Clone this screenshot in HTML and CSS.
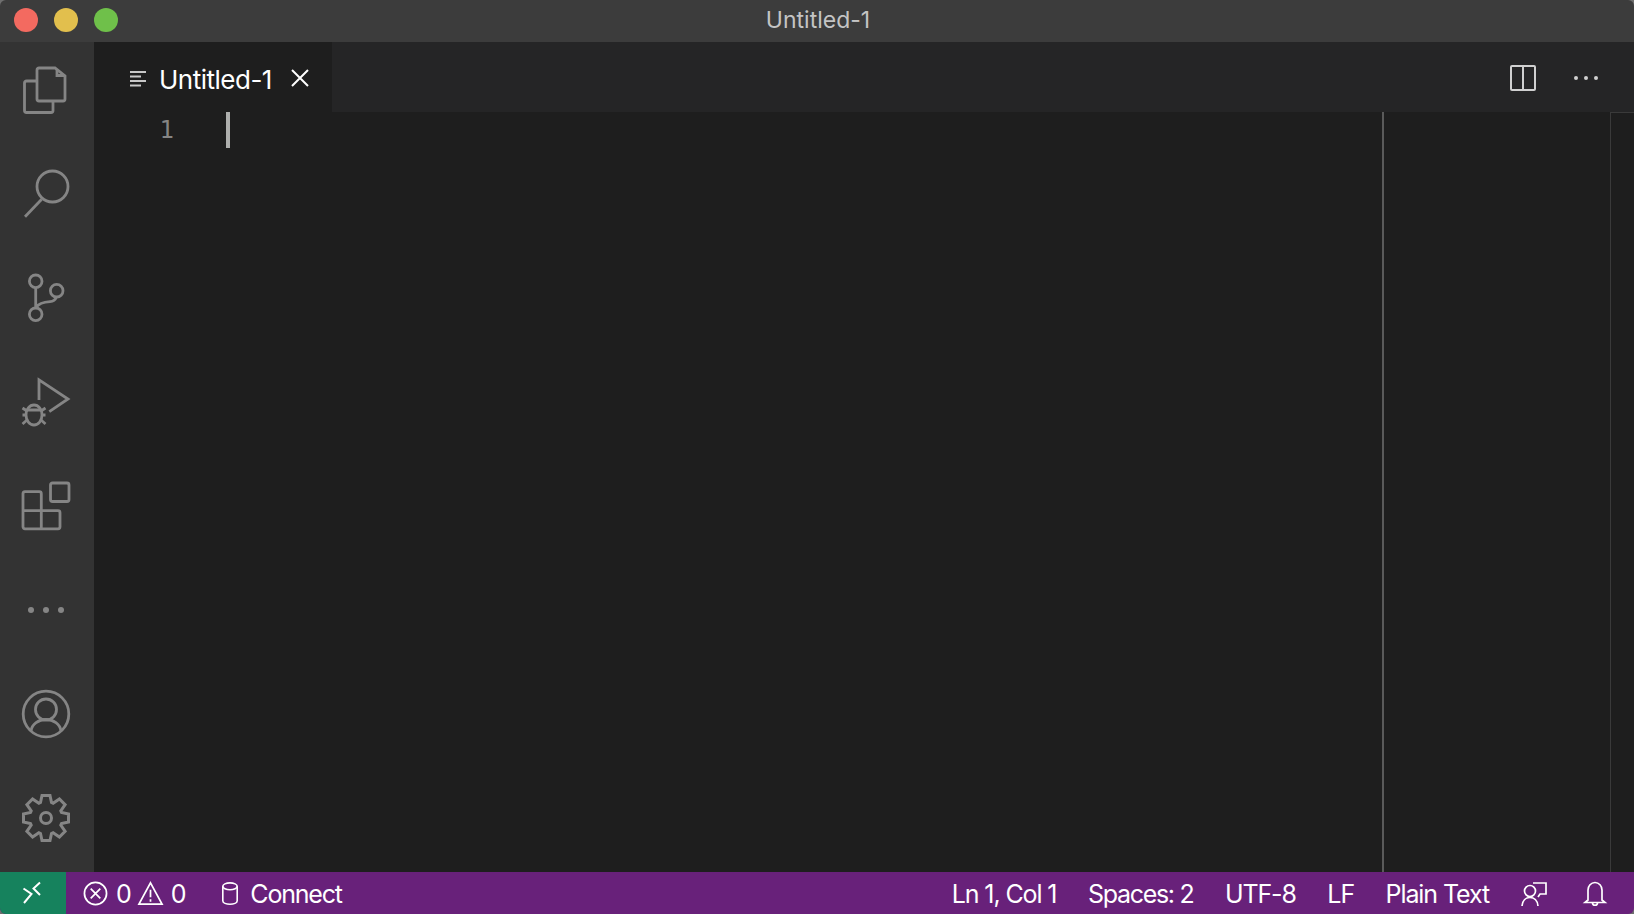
FILE: index.html
```html
<!DOCTYPE html>
<html lang="en">
<head>
<meta charset="utf-8">
<title>Untitled-1</title>
<link rel="stylesheet" href="styles.css">
</head>
<body>
<div class="window">
  <header class="titlebar">
    <div class="lights"><span class="light red"></span><span class="light yellow"></span><span class="light green"></span></div>
    <div class="title">Untitled-1</div>
  </header>
  <div class="main">
    <nav class="activity">
      <svg class="act" viewBox="0 0 48 48"><path d="M17 2H33L43 10V33A2 2 0 0 1 41 35H17A2 2 0 0 1 15 33V4A2 2 0 0 1 17 2Z"/><path d="M35 3V9.500H42.500"/><path d="M15 15H4.500A2 2 0 0 0 2.500 17V44.500A2 2 0 0 0 4.500 46.500H29A2 2 0 0 0 31 44.500V35"/></svg>
      <svg class="act" viewBox="0 0 48 48"><circle cx="30.500" cy="16.500" r="15.500"/><path d="M19.700 29.300L3 46.700"/></svg>
      <svg class="act" viewBox="0 0 48 48"><circle cx="13.700" cy="7.300" r="6.300"/><circle cx="34.700" cy="16.700" r="6.300"/><circle cx="13.700" cy="40.300" r="6.300"/><path d="M13.700 13.600V34"/><path d="M14 33.500C17 29 23 28 28 27.700C32 27.500 33.500 25.500 34.500 23"/></svg>
      <svg class="act" viewBox="0 0 48 48"><path d="M17 22V1.800L46 21L27.300 33.700"/><ellipse cx="12" cy="37" rx="8" ry="10"/><path d="M4.500 32H19.500M5 33L0.500 30M19 33L23.500 30M4 37H0.500M20 37H23.500M5 42L0.500 46M19 42L23.500 46"/></svg>
      <svg class="act" viewBox="0 0 48 48"><rect x="28.500" y="1" width="18.500" height="18.500" rx="2"/><path d="M1 11.500A2 2 0 0 1 3 9.700H17.300A2 2 0 0 1 19.300 11.700V28.700H36A2 2 0 0 1 38 30.700V44.800A2 2 0 0 1 36 46.800H3A2 2 0 0 1 1 44.800ZM1 28.700H19.300V46.800"/></svg>
      <svg class="act" viewBox="0 0 48 48"><g class="fill"><circle cx="9" cy="24" r="3"/><circle cx="24" cy="24" r="3"/><circle cx="39" cy="24" r="3"/></g></svg>
      <div class="act-spacer"></div>
      <svg class="act" viewBox="0 0 48 48"><circle cx="24" cy="24" r="22.800"/><circle cx="24" cy="19.500" r="10.500"/><path d="M9 41C10 34 16.500 29.500 24 29.500S38 34 39 41"/></svg>
      <svg class="act gear" viewBox="-24 -24 48 48"><path d="M-4-22.500L4-22.500L5.500-15.500L7.100-14.800L13.400-19.100L19.100-13.400L14.800-7.100L15.500-5.500L22.500-4L22.500 4L15.500 5.500L14.800 7.100L19.100 13.400L13.400 19.100L7.100 14.800L5.500 15.500L4 22.500L-4 22.500L-5.500 15.500L-7.100 14.800L-13.400 19.100L-19.100 13.400L-14.800 7.100L-15.500 5.500L-22.500 4L-22.500-4L-15.500-5.500L-14.800-7.100L-19.100-13.400L-13.400-19.100L-7.100-14.800L-5.500-15.500Z"/><circle cx="0" cy="0" r="5.500"/></svg>
    </nav>
    <section class="editor">
      <div class="tabbar">
        <div class="tab">
          <svg class="tab-icon" viewBox="0 0 18 17"><path d="M1 2H17M1 6.500H12M1 11H17M1 15.500H12"/></svg>
          <span class="tab-label">Untitled-1</span>
          <svg class="tab-close" viewBox="0 0 18 18"><path d="M1 1L17 17M17 1L1 17"/></svg>
        </div>
        <div class="actions">
          <svg class="split" viewBox="0 0 26 26"><rect x="1" y="1" width="24" height="24" rx="1"/><path d="M13 1V25"/></svg>
          <svg class="more" viewBox="0 0 26 6"><circle cx="3" cy="3" r="2"/><circle cx="13" cy="3" r="2"/><circle cx="23" cy="3" r="2"/></svg>
        </div>
      </div>
      <div class="content">
        <div class="gutter">1</div>
        <div class="text"><span class="cursor"></span></div>
        <div class="minimap"></div>
        <div class="scrollbar"></div>
      </div>
    </section>
  </div>
  <footer class="statusbar">
    <div class="remote">
      <svg class="remote-icon" viewBox="0 0 20 24"><path d="M1.500 7.500L9.500 13L2 22M18 1.500L11.500 7.500L18 14"/></svg>
    </div>
    <div class="status-left">
      <svg class="st-icon" viewBox="0 0 26 26"><circle cx="13" cy="13" r="11.500"/><path d="M8 8L18 18M18 8L8 18"/></svg>
      <span class="num">0</span>
      <svg class="st-icon warn" viewBox="0 0 26 26"><path d="M13 2L25 24H1ZM13 9V17M13 19V21.500"/></svg>
      <span class="num">0</span>
      <svg class="st-icon db" viewBox="0 0 20 26"><path d="M2 5V21C2 23.500 6 25 10 25S18 23.500 18 21V5"/><ellipse cx="10" cy="5" rx="8" ry="3.800"/></svg>
      <span class="connect">Connect</span>
    </div>
    <div class="status-right">
      <span>Ln 1, Col 1</span>
      <span class="spaces">Spaces: 2</span>
      <span>UTF-8</span>
      <span>LF</span>
      <span>Plain Text</span>
      <svg class="feedback" viewBox="0 0 26 26"><circle cx="9" cy="10" r="5.500"/><path d="M1 25C1.500 19.500 5 16.500 9 16.500S16.500 19.500 17 25"/><path d="M12 2H25V13H19L17 16"/></svg>
      <svg class="bell" viewBox="0 0 26 26"><path d="M6 19V9C6 5 9 1.500 13 1.500S20 5 20 9V19L23 21.500H3ZM10.500 22C10.500 25 15.500 25 15.500 22"/></svg>
    </div>
  </footer>
</div>
</body>
</html>
```
FILE: styles.css
```css
* { box-sizing: border-box; }
html, body { margin: 0; height: 100%; background: #6f6f6f; }
body { overflow: hidden; }
svg { display: block; fill: none; stroke: currentColor; overflow: visible; flex: none; }

.window {
  height: 914px;
  display: flex;
  flex-direction: column;
  border-radius: 6px;
  overflow: hidden;
  font-family: Inter, "Liberation Sans", sans-serif;
}

.titlebar {
  height: 42px;
  flex: none;
  background: #3c3c3c;
  display: flex;
  align-items: center;
  padding: 0 12px 2px 14px;
}
.lights { display: flex; gap: 16px; width: 0; flex: none; }
.light { width: 24px; height: 24px; border-radius: 50%; flex: none; }
.red { background: #f36a60; }
.yellow { background: #e2bf4d; }
.green { background: #6fc04a; }
.title { flex: 1; text-align: center; color: #c4c4c4; font-size: 23px; }

.main { flex: 1; display: flex; min-height: 0; }

.activity {
  width: 94px;
  flex: none;
  background: #333333;
  display: flex;
  flex-direction: column;
  align-items: center;
  gap: 56px;
  padding: 24px 2px 30px 0;
  color: #858585;
}
.act { width: 48px; height: 48px; stroke-width: 2.8; }
.gear { stroke-width: 3; }
.act-spacer { flex: 1; margin-top: -56px; }
.fill { fill: currentColor; stroke: none; }

.editor { flex: 1; display: flex; flex-direction: column; background: #1e1e1e; min-width: 0; }

.tabbar { height: 70px; flex: none; background: #252526; display: flex; justify-content: space-between; }
.tab {
  width: 238px;
  background: #1e1e1e;
  display: flex;
  align-items: center;
  padding: 2px 0 0 35px;
  color: #ffffff;
}
.tab-icon { width: 18px; height: 17px; stroke-width: 1.8; color: #c8c8c8; }
.tab-label { font-size: 26px; letter-spacing: -0.5px; margin-left: 12px; padding-top: 2px; white-space: nowrap; }
.tab-close { width: 18px; height: 18px; margin-left: 19px; stroke-width: 2; }
.actions { display: flex; align-items: center; padding: 2px 35px 0 0; gap: 37px; color: #d0d0d0; }
.split { width: 26px; height: 26px; stroke-width: 2; }
.more { width: 26px; height: 6px; fill: currentColor; stroke: none; }

.content { flex: 1; display: flex; min-height: 0; }
.gutter {
  width: 80px;
  text-align: right;
  padding-top: 4px;
  font-family: "DejaVu Sans Mono", "Liberation Mono", monospace;
  font-size: 24px;
  line-height: 28px;
  color: #858585;
  flex: none;
}
.text { width: 1208px; flex: none; padding-left: 52px; }
.cursor { display: block; width: 4px; height: 36px; background: #aeafad; }
.minimap { width: 228px; flex: none; border-left: 2px solid #5a5a5a; }
.scrollbar { flex: 1; border-left: 1px solid #3a3a3a; border-top: 1px solid #3a3a3a; }

.statusbar {
  height: 42px;
  flex: none;
  background: #68217a;
  color: #ffffff;
  display: flex;
  align-items: center;
  font-size: 25px;
  letter-spacing: -1.1px;
}
.remote { width: 66px; height: 42px; background: #16825d; display: flex; align-items: center; justify-content: center; flex: none; padding-right: 3px; }
.remote-icon { width: 20px; height: 24px; stroke-width: 2; }
.status-left { display: flex; align-items: center; padding-left: 17px; }
.st-icon { width: 25px; height: 25px; stroke-width: 1.8; }
.num { margin-left: 8px; margin-right: 7px; padding-top: 2px; }
.db { width: 18px; height: 25px; margin-left: 29px; }
.connect { margin-left: 11px; padding-top: 2px; letter-spacing: -1.2px; }
.status-right { margin-left: auto; display: flex; align-items: center; gap: 31.5px; padding: 2px 26px 0 0; }
.spaces { letter-spacing: -1.3px; }
.feedback { width: 26px; height: 26px; stroke-width: 1.7; }
.bell { width: 26px; height: 26px; stroke-width: 1.7; margin-left: 4px; }
```
